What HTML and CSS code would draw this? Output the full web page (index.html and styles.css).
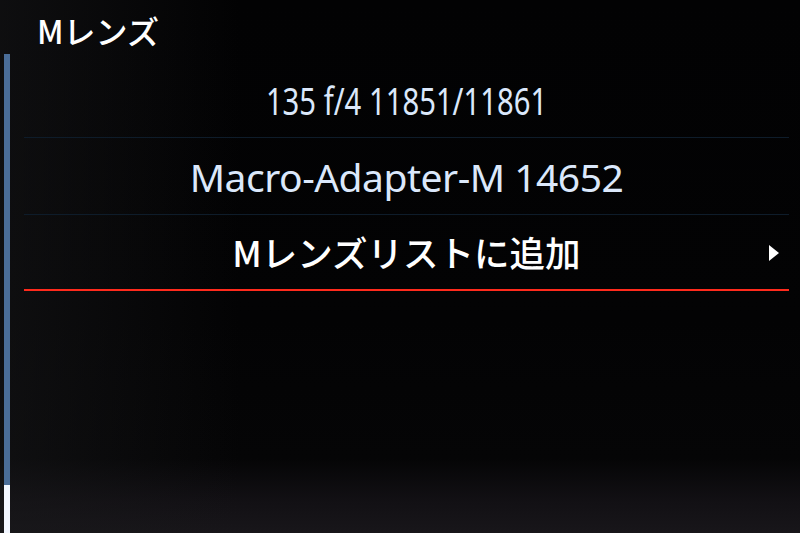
FILE: index.html
```html
<!DOCTYPE html>
<html lang="ja">
<head>
<meta charset="utf-8">
<link rel="stylesheet" href="styles.css">
</head>
<body>
<div class="screen">
  <div class="scrollbar"><div class="thumb"></div></div>
  <div class="main">
    <div class="title">Mレンズ</div>
    <div class="list">
      <div class="row lens"><span class="label narrow">135 f/4 11851/11861</span></div>
      <div class="row lens"><span class="label tight">Macro-Adapter-M 14652</span></div>
      <div class="row action selected">
        <span class="spacer"></span>
        <span class="label jp">Mレンズリストに追加</span>
        <svg class="arrow" width="10" height="16" viewBox="0 0 10 16"><polygon points="0,0 10,8 0,16" fill="#ffffff"/></svg>
      </div>
    </div>
  </div>
</div>
</body>
</html>
```
FILE: styles.css
```css
html, body {
  margin: 0;
  padding: 0;
}
body {
  width: 800px;
  height: 533px;
  overflow: hidden;
  background:
    linear-gradient(to right, rgba(24, 24, 26, 0.55) 0%, rgba(24, 24, 26, 0) 30%),
    linear-gradient(to bottom, #020203 0%, #030304 60%, #050506 86%, #121014 94%, #18161a 100%);
  font-family: "Noto Sans", "Noto Sans CJK JP", sans-serif;
}
.screen {
  display: flex;
  height: 533px;
}
.scrollbar {
  width: 6px;
  margin-left: 4px;
  margin-top: 54px;
  background: #4a6d98;
  display: flex;
  flex-direction: column;
  justify-content: flex-end;
}
.thumb {
  height: 48px;
  background: #f2f6ff;
}
.main {
  flex: 1;
  padding-left: 14px;
  padding-right: 11px;
}
.title {
  height: 62px;
  padding-left: 13px;
  box-sizing: border-box;
  font-family: "Noto Sans CJK JP", sans-serif;
  font-size: 32px;
  font-weight: 500;
  line-height: 62px;
  margin-top: -1px;
  color: #ffffff;
}
.list {
  display: flex;
  flex-direction: column;
}
.row {
  height: 76px;
  border-bottom: 1px solid #0e1c2a;
  display: flex;
  align-items: center;
  justify-content: center;
}
.row.lens .label {
  font-family: "Noto Sans", sans-serif;
  font-size: 39px;
  color: #dbe8fb;
  display: inline-block;
  line-height: 1;
}
.label.narrow {
  transform: scaleX(0.75);
}
.label.tight {
  letter-spacing: -0.5px;
}
.row.action {
  display: grid;
  grid-template-columns: 1fr auto 1fr;
  height: 74px;
  border-bottom: 2px solid #ff2a1c;
}
.row.action .jp {
  font-family: "Noto Sans CJK JP", sans-serif;
  font-size: 35.5px;
  font-weight: 500;
  color: #ffffff;
  line-height: 1;
}
.arrow {
  justify-self: end;
  margin-right: 10px;
  margin-top: 1px;
}
```
